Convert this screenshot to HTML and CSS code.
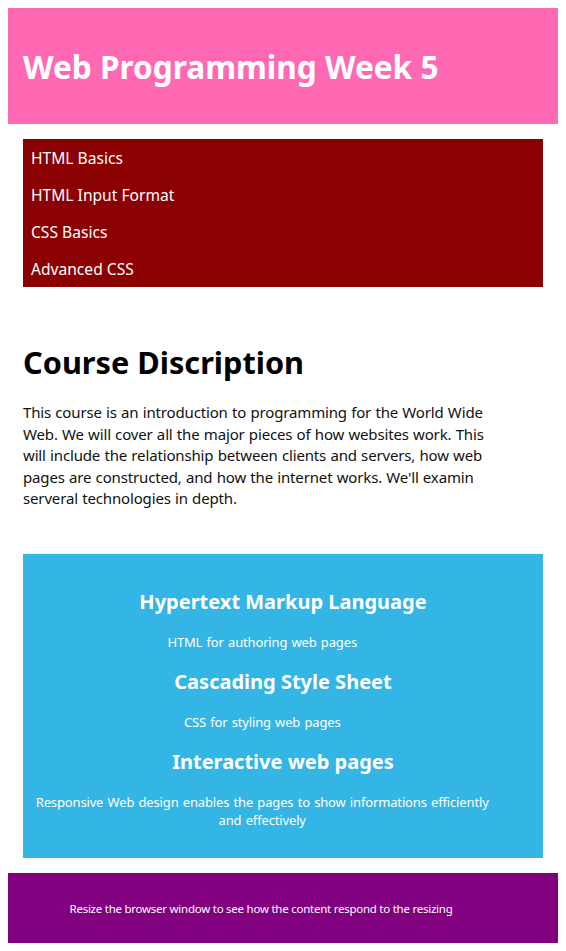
FILE: index.html
```html
<!DOCTYPE html>
<html lang="en">
<head>
<meta charset="utf-8">
<title>Web Programming Week 5</title>
<link rel="stylesheet" href="styles.css">
</head>
<body>
<header class="site-header">
  <h1 class="site-title">Web Programming Week 5</h1>
</header>
<div class="main">
  <nav class="menu">
    <ul class="menu-list">
      <li class="menu-item">HTML Basics</li>
      <li class="menu-item">HTML Input Format</li>
      <li class="menu-item">CSS Basics</li>
      <li class="menu-item">Advanced CSS</li>
    </ul>
  </nav>
  <section class="course">
    <h1 class="course-title">Course Discription</h1>
    <p class="course-text">This course is an introduction to programming for the World Wide Web. We will cover all the major pieces of how websites work. This will include the relationship between clients and servers, how web pages are constructed, and how the internet works. We'll examin serveral technologies in depth.</p>
  </section>
  <section class="topics">
    <h2 class="topic-title">Hypertext Markup Language</h2>
    <p class="topic-text">HTML for authoring web pages</p>
    <h2 class="topic-title">Cascading Style Sheet</h2>
    <p class="topic-text">CSS for styling web pages</p>
    <h2 class="topic-title">Interactive web pages</h2>
    <p class="topic-text">Responsive Web design enables the pages to show informations efficiently and effectively</p>
  </section>
</div>
<footer class="site-footer">
  <p class="footer-text">Resize the browser window to see how the content respond to the resizing</p>
</footer>
</body>
</html>
```
FILE: styles.css
```css
body {
  margin: 8px;
  font-family: "Noto Sans", "Open Sans", sans-serif;
  color: #000;
}

.site-header {
  background: #ff69b4;
  padding: 15px;
}

.site-title {
  margin: 22px 0 20px;
  font-size: 31.6px;
  line-height: 44px;
  font-weight: bold;
  color: #fff;
}

.main {
  margin: 0 15px;
}

.menu {
  margin-top: 15px;
  background: #8b0000;
}

.menu-list {
  list-style: none;
  margin: 0;
  padding: 0;
}

.menu-item {
  padding: 9px 8px 7px;
  font-size: 15.6px;
  line-height: 21px;
  color: #fff;
}

.course-title {
  margin: 54px 0 19px;
  font-size: 30.7px;
  line-height: 42px;
  font-weight: bold;
}

.course-text {
  width: 92%;
  margin: 0;
  font-size: 15px;
  line-height: 21.5px;
  letter-spacing: -0.15px;
  word-spacing: 0.5px;
  color: #111;
}

.topics {
  margin-top: 44px;
  background: #33b5e5;
  padding: 17px 0 12px;
  text-align: center;
  color: #fff;
}

.topic-title {
  margin: 17px 0;
  font-size: 20px;
  line-height: 28px;
  font-weight: bold;
}

.topic-text {
  width: 92%;
  margin: 17px 0;
  font-size: 13px;
  line-height: 18px;
  letter-spacing: -0.15px;
  word-spacing: 1px;
}

.site-footer {
  margin-top: 15px;
  background: #800080;
  padding: 28px 0 26px;
  text-align: center;
}

.footer-text {
  width: 92%;
  margin: 0;
  font-size: 11.5px;
  line-height: 16px;
  letter-spacing: -0.25px;
  color: #fff;
}
```
